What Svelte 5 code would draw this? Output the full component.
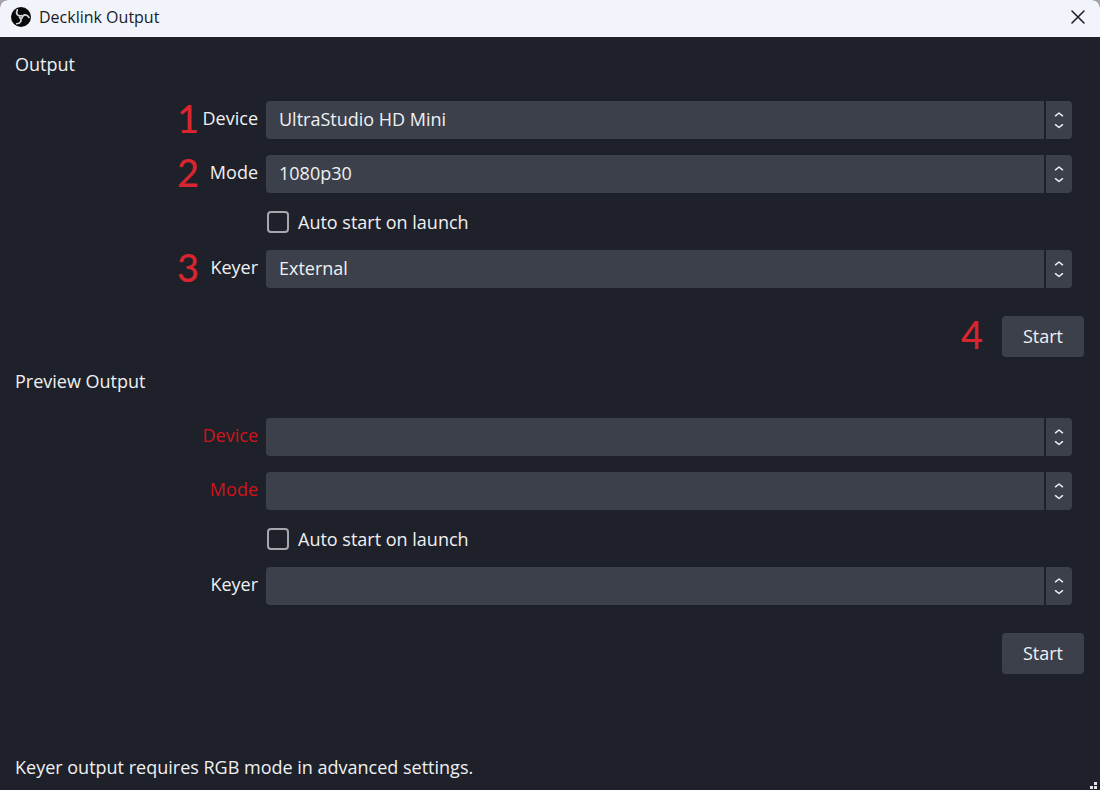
<script>
  let sections = $state([
    {
      id: 'output',
      title: 'Output',
      startStep: '4',
      autoStart: false,
      device: { value: 'UltraStudio HD Mini', step: '1', missing: false },
      mode: { value: '1080p30', step: '2', missing: false },
      keyer: { value: 'External', step: '3', missing: false },
    },
    {
      id: 'preview',
      title: 'Preview Output',
      startStep: '',
      autoStart: false,
      device: { value: '', step: '', missing: true },
      mode: { value: '', step: '', missing: true },
      keyer: { value: '', step: '', missing: false },
    },
  ]);
</script>

{#snippet field(id, label, item)}
  <span class="step">{item.step}</span>
  <label class="field-label" class:missing={item.missing} for={id}>{label}</label>
  <div class="select-box">
    <select {id}>
      <option>{item.value}</option>
    </select>
    <span class="arrows">
      <svg width="10" height="18" viewBox="0 0 10 18" fill="none" stroke="currentColor" stroke-width="1.5" stroke-linecap="round" stroke-linejoin="round"><path d="M1.5 4.8 L5 2 L8.5 4.8 M1.5 13.7 L5 16.5 L8.5 13.7" /></svg>
    </span>
  </div>
{/snippet}

<div class="dialog">
  <header class="titlebar">
    <svg width="20" height="20" viewBox="-12 -12 24 24" aria-hidden="true">
      <circle r="12" fill="#08090b" />
      <g fill="none" stroke="#d5d7dd" stroke-width="2" stroke-linecap="round">
        {#each [0, 120, 240] as angle}
          <path d="M-4.4 -8.6 C-6.6 -4 -4.4 -0.4 0.8 -1.6" transform="rotate({angle})" />
        {/each}
      </g>
    </svg>
    <h1>Decklink Output</h1>
    <button class="close" aria-label="Close">
      <svg width="14" height="14" viewBox="0 0 14 14" fill="none" stroke="currentColor" stroke-width="1.5" stroke-linecap="round"><path d="M1 1 L13 13 M13 1 L1 13" /></svg>
    </button>
  </header>

  <main>
    {#each sections as section (section.id)}
      <section>
        <h2>{section.title}</h2>
        <div class="form">
          {@render field(`${section.id}-device`, 'Device', section.device)}
          {@render field(`${section.id}-mode`, 'Mode', section.mode)}
          <label class="check">
            <input type="checkbox" bind:checked={section.autoStart} />
            Auto start on launch
          </label>
          {@render field(`${section.id}-keyer`, 'Keyer', section.keyer)}
        </div>
        <div class="actions">
          <span class="step">{section.startStep}</span>
          <button class="start">Start</button>
        </div>
      </section>
    {/each}
  </main>

  <footer>
    <p>Keyer output requires RGB mode in advanced settings.</p>
    <svg class="grip" width="8" height="8" viewBox="0 0 8 8" fill="#e2e2e8"><path d="M5 0h3v3h-3z M1 4h3v3h-3z M5 4h3v3h-3z" /></svg>
  </footer>
</div>

<style>
  :global(body) {
    margin: 0;
    background: #a9a3a8;
  }

  .dialog {
    display: flex;
    flex-direction: column;
    min-height: 100vh;
    overflow: hidden;
    border-radius: 8px 8px 0 0;
    background: #1f212a;
    color: #f0f0f2;
    font-family: "Open Sans", "Noto Sans", sans-serif;
    font-size: 18px;
    line-height: 24px;
  }

  .titlebar {
    display: flex;
    align-items: center;
    gap: 8px;
    height: 37px;
    padding: 0 11px;
    box-sizing: border-box;
    background: #f1f4fa;
    color: #1b1b1f;
  }

  .titlebar svg {
    display: block;
    margin-bottom: 4px;
  }

  h1 {
    flex: 1;
    margin: 0 0 4px;
    font-size: 16px;
    font-weight: 400;
  }

  .close {
    padding: 4px;
    border: none;
    background: none;
    color: #1b1b1f;
  }

  main {
    flex: 1;
    display: flex;
    flex-direction: column;
    gap: 12px;
    padding: 15px 16px 16px 15px;
  }

  h2 {
    margin: 0;
    font-size: 18px;
    font-weight: 400;
  }

  .form {
    display: grid;
    grid-template-columns: 184px 59px 1fr;
    align-items: center;
    row-gap: 16px;
    margin-top: 25px;
    padding-right: 12px;
  }

  .step {
    padding-bottom: 5px;
    font-family: Lato, sans-serif;
    font-size: 38px;
    font-weight: 500;
    line-height: 30px;
    text-align: right;
    color: #d9252f;
  }

  .field-label {
    padding-bottom: 4px;
    text-align: right;
  }

  .missing {
    color: #cf1419;
  }

  .select-box {
    position: relative;
    margin-left: 8px;
  }

  select {
    display: block;
    width: 100%;
    height: 38px;
    padding: 0 40px 2px 13px;
    border: none;
    border-radius: 4px;
    appearance: none;
    background: #3c404b;
    color: inherit;
    font: inherit;
  }

  .arrows {
    position: absolute;
    top: 0;
    right: 0;
    bottom: 0;
    display: flex;
    align-items: center;
    justify-content: center;
    width: 26px;
    border-left: 2px solid #1f212a;
    pointer-events: none;
  }

  .check {
    grid-column: 3;
    justify-self: start;
    display: flex;
    align-items: center;
    gap: 9px;
    height: 25px;
    margin-left: 9px;
  }

  .check input {
    width: 22px;
    height: 22px;
    margin: 0;
    border: 2px solid #a5a6ae;
    border-radius: 4px;
    appearance: none;
  }

  .check input:checked {
    background: #a5a6ae;
  }

  .actions {
    display: flex;
    align-items: center;
    justify-content: flex-end;
    gap: 19px;
    margin-top: 28px;
  }

  .start {
    width: 82px;
    height: 41px;
    padding: 0 0 2px;
    border: none;
    border-radius: 4px;
    background: #3c404b;
    color: inherit;
    font: inherit;
  }

  footer {
    display: flex;
    align-items: flex-end;
    justify-content: space-between;
    padding-left: 15px;
  }

  footer p {
    margin: 0 0 11px;
  }

  .grip {
    margin-right: 3px;
  }
</style>
